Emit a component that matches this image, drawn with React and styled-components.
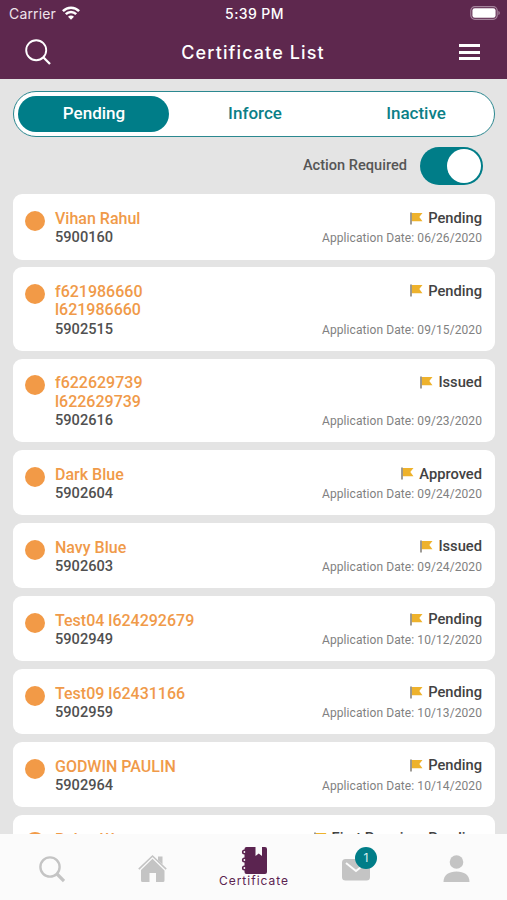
import React from "react";
import styled, { createGlobalStyle } from "styled-components";

const GlobalStyle = createGlobalStyle`
    * {
        box-sizing: border-box;
    }
    body {
        margin: 0;
        font-family: Roboto, sans-serif;
        background: #e4e4e4;
    }
`;

const Screen = styled.div`
    width: 507px;
    height: 900px;
    display: flex;
    flex-direction: column;
    overflow: hidden;
    background: #e4e4e4;
`;

const Header = styled.header`
    flex: none;
    height: 79px;
    background: #5e284e;
    color: #fff;
`;

const StatusBar = styled.div`
    height: 27px;
    display: grid;
    grid-template-columns: 1fr auto 1fr;
    align-items: center;
    padding: 0 7px 0 9px;
    font-family: Inter, sans-serif;
    font-size: 14px;
    svg {
        display: block;
    }
`;

const Carrier = styled.div`
    display: flex;
    align-items: center;
    gap: 6px;
    color: #eee3eb;
    letter-spacing: 0.15px;
    svg {
        margin-top: -2px;
    }
`;

const Clock = styled.div`
    font-size: 14px;
    font-weight: 500;
    letter-spacing: 0.4px;
`;

const Battery = styled.div`
    justify-self: end;
    margin-top: -1px;
`;

const TitleBar = styled.div`
    height: 50px;
    display: grid;
    grid-template-columns: 1fr auto 1fr;
    align-items: center;
    padding: 0 27px 0 25px;
    svg {
        display: block;
    }
`;

const Title = styled.h1`
    margin: 0;
    padding-left: 1px;
    font-family: Inter, sans-serif;
    font-size: 18px;
    font-weight: 500;
    letter-spacing: 1.1px;
`;

const MenuButton = styled.div`
    justify-self: end;
    width: 21px;
    display: flex;
    flex-direction: column;
    gap: 3.2px;
    span {
        height: 3px;
        background: #fff;
    }
`;

const Content = styled.main`
    flex: 1;
    min-height: 0;
    overflow: hidden;
    padding: 12px 12.5px 0;
`;

const Tabs = styled.nav`
    height: 46px;
    display: flex;
    padding: 4px;
    border: 1.4px solid #2b8890;
    border-radius: 23px;
    background: #fff;
`;

const Tab = styled.div`
    flex: none;
    width: ${p => (p.$active ? "151px" : "161px")};
    margin-right: ${p => (p.$active ? "5px" : "0")};
    border-radius: 18px;
    display: flex;
    align-items: center;
    justify-content: center;
    padding: 0 0 2px 2px;
    font-size: 17px;
    font-weight: 500;
    background: ${p => (p.$active ? "#007d88" : "transparent")};
    color: ${p => (p.$active ? "#fff" : "#0b7f87")};
`;

const FilterRow = styled.div`
    height: 57px;
    display: flex;
    justify-content: flex-end;
    align-items: center;
    gap: 13px;
    padding-right: 11.5px;
    color: #565656;
    font-size: 14.6px;
    font-weight: 500;
`;

const FilterLabel = styled.span`
    padding-bottom: 1px;
`;

const Toggle = styled.div`
    width: 63px;
    height: 38px;
    padding: 2px;
    border-radius: 19px;
    background: #007d88;
    display: flex;
    align-items: center;
    justify-content: flex-end;
    span {
        width: 34px;
        height: 34px;
        border-radius: 50%;
        background: #fff;
    }
`;

const List = styled.div`
    display: flex;
    flex-direction: column;
    gap: 7.4px;
    padding-top: 0.3px;
`;

const Card = styled.section`
    flex: none;
    display: flex;
    padding: 15.9px 12.5px 13.1px;
    border-radius: 9px;
    background: #fff;
`;

const Dot = styled.div`
    width: 20px;
    height: 20px;
    margin: 1px 10px 0 0;
    border-radius: 50%;
    background: #f29a47;
`;

const Person = styled.div`
    flex: 1;
    font-weight: 500;
    line-height: 18.3px;
    h4 {
        margin: 0;
        font-size: 16px;
        font-weight: 500;
        white-space: pre-line;
        color: #f09a49;
    }
    p {
        margin: 0;
        font-size: 14.6px;
        color: #505050;
    }
`;

const Info = styled.div`
    display: flex;
    flex-direction: column;
    justify-content: space-between;
    align-items: flex-end;
    white-space: nowrap;
`;

const Status = styled.div`
    display: flex;
    align-items: center;
    gap: 5px;
    margin-top: -1.2px;
    font-size: 14.7px;
    font-weight: 500;
    line-height: 18px;
    color: #424242;
`;

const DateText = styled.div`
    margin-bottom: 1.5px;
    font-size: 12px;
    line-height: 14px;
    letter-spacing: 0.08px;
    color: #818181;
`;

const BottomBar = styled.footer`
    flex: none;
    height: 66px;
    display: grid;
    grid-template-columns: repeat(5, 1fr);
    background: #fbfbfb;
`;

const NavItem = styled.div`
    display: flex;
    flex-direction: column;
    align-items: center;
    padding: ${p => (p.$active ? "13px" : "20px")} 0 0 1px;
    color: ${p => (p.$active ? "#5b2450" : "#c4c4c4")};
    font-family: Inter, sans-serif;
    font-size: 12px;
    line-height: 14px;
    letter-spacing: 1px;
    svg {
        display: block;
    }
`;

const MailIcon = styled.div`
    position: relative;
    margin-left: 1px;
`;

const Badge = styled.span`
    position: absolute;
    top: -7px;
    left: 13px;
    width: 22px;
    height: 22px;
    border-radius: 50%;
    display: flex;
    align-items: center;
    justify-content: center;
    background: #007d88;
    color: #d8f0f1;
    font-size: 12px;
    letter-spacing: 0;
`;

const certificates = [
    { name: "Vihan Rahul", number: "5900160", status: "Pending", date: "06/26/2020" },
    { name: "f621986660\nl621986660", number: "5902515", status: "Pending", date: "09/15/2020" },
    { name: "f622629739\nl622629739", number: "5902616", status: "Issued", date: "09/23/2020" },
    { name: "Dark Blue", number: "5902604", status: "Approved", date: "09/24/2020" },
    { name: "Navy Blue", number: "5902603", status: "Issued", date: "09/24/2020" },
    { name: "Test04 l624292679", number: "5902949", status: "Pending", date: "10/12/2020" },
    { name: "Test09 l62431166", number: "5902959", status: "Pending", date: "10/13/2020" },
    { name: "GODWIN PAULIN", number: "5902964", status: "Pending", date: "10/14/2020" },
    { name: "Baker Water", number: "5902970", status: "First Premium Pending", date: "10/14/2020" }
];

function Flag() {
    return (
        <svg width="13" height="13" viewBox="0 0 13 13">
            <path d="M1.8 1H12.5L9.3 5L12.5 9.3H1.8Z" fill="#eeb22c" />
            <path d="M1 0.5V12.5" stroke="#5f5a52" strokeWidth="1.2" />
        </svg>
    );
}

function CertificateCard({ name, number, status, date }) {
    return (
        <Card>
            <Dot />
            <Person>
                <h4>{name}</h4>
                <p>{number}</p>
            </Person>
            <Info>
                <Status><Flag />{status}</Status>
                <DateText>Application Date: {date}</DateText>
            </Info>
        </Card>
    );
}

function App() {
    return (
        <Screen>
            <GlobalStyle />
            <Header>
                <StatusBar>
                    <Carrier>
                        Carrier
                        <svg width="18" height="14" viewBox="0 0 18 14" fill="none" stroke="#fff" strokeWidth="2.5">
                            <path d="M0.9 5.2C5.4 0.6 12.6 0.6 17.1 5.2" />
                            <path d="M3.8 8.2C6.7 5.3 11.3 5.3 14.2 8.2" />
                            <path d="M6 10.7C7.7 9 10.3 9 12 10.7L9 13.8Z" fill="#fff" stroke="none" />
                        </svg>
                    </Carrier>
                    <Clock>5:39 PM</Clock>
                    <Battery>
                        <svg width="30" height="14" viewBox="0 0 30 14">
                            <rect x="0.8" y="0.7" width="26.4" height="12.6" rx="4" fill="none" stroke="#a5849c" strokeWidth="1.2" />
                            <rect x="2.4" y="2.3" width="23.2" height="9.4" rx="2.3" fill="#fff" />
                            <path d="M28.4 5C30.2 5.6 30.2 8.4 28.4 9Z" fill="#a5849c" />
                        </svg>
                    </Battery>
                </StatusBar>
                <TitleBar>
                    <svg width="26" height="26" viewBox="0 0 26 26" fill="none" stroke="#fff" strokeWidth="1.9">
                        <circle cx="11.2" cy="11.2" r="10" />
                        <path d="M18.3 18.3L25 25" strokeWidth="2.3" />
                    </svg>
                    <Title>Certificate List</Title>
                    <MenuButton><span /><span /><span /></MenuButton>
                </TitleBar>
            </Header>
            <Content>
                <Tabs>
                    <Tab $active>Pending</Tab>
                    <Tab>Inforce</Tab>
                    <Tab>Inactive</Tab>
                </Tabs>
                <FilterRow>
                    <FilterLabel>Action Required</FilterLabel>
                    <Toggle><span /></Toggle>
                </FilterRow>
                <List>
                    {certificates.map(item => (
                        <CertificateCard key={item.number} {...item} />
                    ))}
                </List>
            </Content>
            <BottomBar>
                <NavItem>
                    <svg width="27" height="29" viewBox="0 0 27 29" fill="none" stroke="#c4c4c4" strokeWidth="2.4">
                        <circle cx="12" cy="13" r="9.6" />
                        <path d="M19 20L26 27" strokeWidth="3.2" />
                    </svg>
                </NavItem>
                <NavItem>
                    <svg width="29" height="28" viewBox="0 0 29 28" fill="#c4c4c4">
                        <path d="M0.8 15.2L14.5 2L28.2 15.2" fill="none" stroke="#c4c4c4" strokeWidth="1.6" />
                        <path d="M20 2.5H24.5V10.5L20 6.2Z" />
                        <path d="M14.5 4.8L26.5 16.4V26.5Q26.5 28 25 28H18V19H11.5V28H4.5Q3 28 3 26.5V16Z" />
                    </svg>
                </NavItem>
                <NavItem $active>
                    <svg width="26" height="27" viewBox="0 0 26 27">
                        <path d="M5.5 0H14.5V9L17.7 6.4L21 9V0H24Q26 0 26 2V25Q26 27 24 27H5.5Q3.5 27 3.5 25V2Q3.5 0 5.5 0Z" fill="#5b2450" />
                        {[5, 13, 21].map(y => (
                            <circle key={y} cx="3.4" cy={y} r="1.7" fill="#fbfbfb" stroke="#5b2450" strokeWidth="1.6" />
                        ))}
                    </svg>
                    Certificate
                </NavItem>
                <NavItem>
                    <MailIcon>
                        <svg width="28" height="27" viewBox="0 0 28 27">
                            <rect y="5" width="28" height="21.5" rx="3.5" fill="#c4c4c4" />
                            <path d="M4 9L14 17L24 9" fill="none" stroke="#fbfbfb" strokeWidth="2" />
                        </svg>
                        <Badge>1</Badge>
                    </MailIcon>
                </NavItem>
                <NavItem>
                    <svg width="27" height="28" viewBox="0 0 27 28" fill="#c4c4c4">
                        <circle cx="13.5" cy="8" r="6.8" />
                        <path d="M0.5 28C0.5 21 6 17.6 13.5 17.6S26.5 21 26.5 28Z" />
                    </svg>
                </NavItem>
            </BottomBar>
        </Screen>
    );
}

export default App;
